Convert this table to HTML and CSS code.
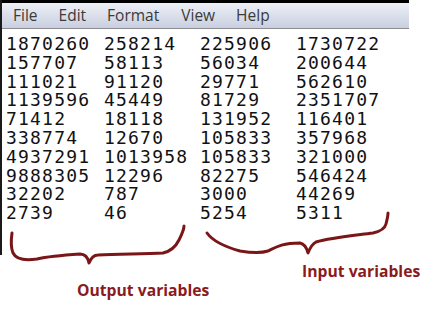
FILE: index.html
```html
<!DOCTYPE html>
<html>
<head>
<meta charset="utf-8">
<link rel="stylesheet" href="styles.css">
</head>
<body>
<div class="page">
  <div class="window">
    <div class="topedge"></div>
    <div class="menubar">
      <span class="menu m-file">File</span>
      <span class="menu m-edit">Edit</span>
      <span class="menu m-format">Format</span>
      <span class="menu m-view">View</span>
      <span class="menu m-help">Help</span>
    </div>
    <div class="sep"></div>
    <div class="editor">
      <span>1870260</span><span>258214</span><span>225906</span><span>1730722</span>
      <span>157707</span><span>58113</span><span>56034</span><span>200644</span>
      <span>111021</span><span>91120</span><span>29771</span><span>562610</span>
      <span>1139596</span><span>45449</span><span>81729</span><span>2351707</span>
      <span>71412</span><span>18118</span><span>131952</span><span>116401</span>
      <span>338774</span><span>12670</span><span>105833</span><span>357968</span>
      <span>4937291</span><span>1013958</span><span>105833</span><span>321000</span>
      <span>9888305</span><span>12296</span><span>82275</span><span>546424</span>
      <span>32202</span><span>787</span><span>3000</span><span>44269</span>
      <span>2739</span><span>46</span><span>5254</span><span>5311</span>
    </div>
  </div>
  <svg class="braces" width="434" height="318" viewBox="0 0 434 318">
    <path d="M12 233 C11 240 11 248 13 253 C16 259 24 261 37 259 C50 256 65 255 80 254 C85 254 88 258 89 263 C91 258 93 255 98 255 C120 254 145 254 163 253 C172 251 176 246 179 240 C182 234 184 230 184 226" />
    <path d="M207 233 C212 240 222 246 240 251 C252 253 262 253 268 251 C276 247 282 243 300 243 C305 244 307 249 308 253 C310 248 312 244 316 242 C330 238 350 236 373 233 C382 231 385 228 386 224 C387 220 388 216 388 213" />
  </svg>
  <div class="label label-in">Input variables</div>
  <div class="label label-out">Output variables</div>
</div>
</body>
</html>
```

FILE: styles.css
```css
html, body {
  margin: 0;
  padding: 0;
  background: #ffffff;
}
.page {
  position: relative;
  width: 434px;
  height: 318px;
  overflow: hidden;
}
.window {
  width: 407px;
  height: 255px;
  border-left: 2px solid #1a1a1a;
  background: #ffffff;
}
.topedge {
  height: 3px;
  background: #000000;
}
.menubar {
  height: 25px;
  display: flex;
  align-items: center;
  background: linear-gradient(#eef0f6 0%, #dde1ec 45%, #c9cfe1 100%);
  font-family: "Open Sans", "Noto Sans", sans-serif;
  font-size: 15.5px;
  color: #3a3a3a;
}
.menu {
  display: block;
  line-height: 25px;
}
.m-file { margin-left: 11px; }
.m-edit { margin-left: 21px; }
.m-format { margin-left: 21px; }
.m-view { margin-left: 22px; }
.m-help { margin-left: 21px; }
.sep {
  height: 1px;
  background: #8c8c8c;
  border-bottom: 2px solid #ffffff;
}
.editor {
  display: grid;
  grid-template-columns: 98px 96px 96px auto;
  padding: 4px 0 0 4px;
  font-family: "DejaVu Sans Mono", monospace;
  font-size: 18px;
  letter-spacing: 1.2px;
  line-height: 18.8px;
  color: #111111;
}
.braces {
  position: absolute;
  left: 0;
  top: 0;
  fill: none;
  stroke: #7a1518;
  stroke-width: 3;
  stroke-linecap: round;
  stroke-linejoin: round;
}
.label {
  position: absolute;
  font-family: "Open Sans", "Noto Sans", sans-serif;
  font-weight: 700;
  font-size: 15.7px;
  line-height: 20px;
  color: #8a1a1c;
  white-space: nowrap;
}
.label-in {
  left: 302px;
  top: 261px;
}
.label-out {
  left: 77px;
  top: 280px;
}
```
